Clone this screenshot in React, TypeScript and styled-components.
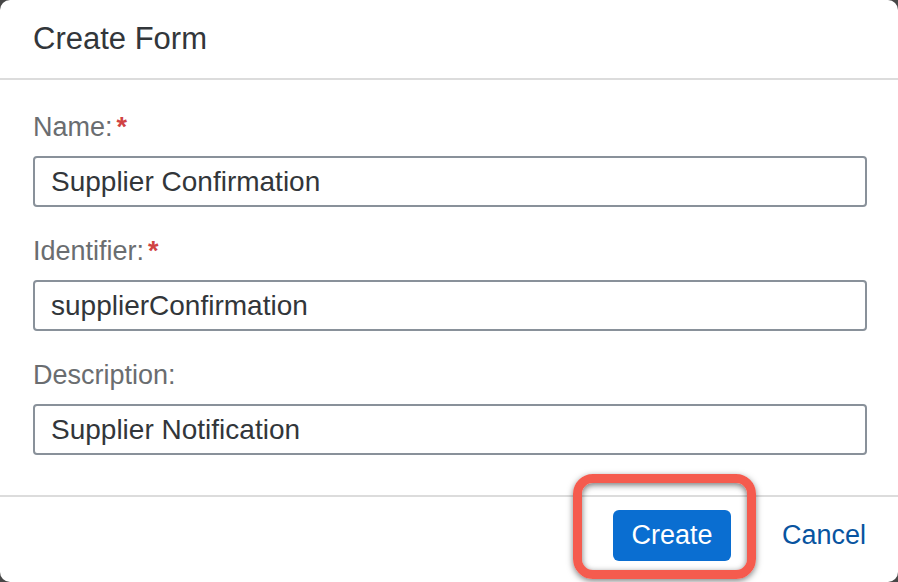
import React from "react";
import styled, { createGlobalStyle } from "styled-components";

const FONT = `"Liberation Sans", Arial, sans-serif`;

const Global = createGlobalStyle`
  html, body { margin: 0; padding: 0; background: #474747; }
  body { font-family: ${FONT}; }
  * { box-sizing: border-box; }
`;

const Dialog = styled.div`
  width: 898px;
  height: 582px;
  background: #ffffff;
  border-radius: 10px;
  overflow: hidden;
  display: flex;
  flex-direction: column;
`;

const Header = styled.header`
  height: 80px;
  flex: none;
  display: flex;
  align-items: center;
  padding: 0 33px;
  border-bottom: 2px solid #dcdcdc;
`;

const Title = styled.h1`
  margin: 0;
  font-size: 31px;
  font-weight: 400;
  color: #32363a;
`;

const Content = styled.div`
  padding: 32px 31px 40px 33px;
  display: flex;
  flex-direction: column;
  border-bottom: 2px solid #dcdcdc;
`;

const Field = styled.div<{ $last?: boolean }>`
  display: flex;
  flex-direction: column;
  margin-bottom: ${(p) => (p.$last ? 0 : 29)}px;
`;

const Label = styled.label`
  font-size: 27px;
  line-height: 30px;
  color: #6a6d70;
  margin-bottom: 14px;
`;

const Required = styled.span`
  color: #d04343;
  font-weight: 700;
  margin-left: 4px;
`;

const Input = styled.input`
  height: 51px;
  border: 2px solid #89919a;
  border-radius: 4px;
  padding: 0 16px;
  font-family: ${FONT};
  font-size: 28px;
  color: #32363a;
  background: #fff;
  outline: none;
`;

const Footer = styled.footer`
  display: flex;
  justify-content: flex-end;
  align-items: center;
  padding: 13px 32px 0 0;
  gap: 51px;
`;

const Highlight = styled.div`
  position: relative;
  display: flex;
`;

const Annotation = styled.div`
  position: absolute;
  left: -40px;
  top: -36px;
  right: -25px;
  bottom: -18px;
  border: 9px solid #f55b4e;
  border-radius: 20px;
  box-shadow: 0 2px 6px rgba(0, 0, 0, 0.5), inset 0 2px 6px rgba(0, 0, 0, 0.55);
  pointer-events: none;
`;

const Button = styled.button<{ $primary?: boolean }>`
  height: 51px;
  border-radius: 6px;
  font-family: ${FONT};
  font-size: 27px;
  cursor: pointer;
  border: none;
  padding: 0;
  background: ${(p) => (p.$primary ? "#0a6ed1" : "transparent")};
  color: ${(p) => (p.$primary ? "#ffffff" : "#0854a0")};
  width: ${(p) => (p.$primary ? "118px" : "auto")};
`;

export default function App() {
  return (
    <>
      <Global />
      <Dialog>
        <Header>
          <Title>Create Form</Title>
        </Header>
        <Content>
          <Field>
            <Label>
              Name:<Required>*</Required>
            </Label>
            <Input defaultValue="Supplier Confirmation" />
          </Field>
          <Field>
            <Label>
              Identifier:<Required>*</Required>
            </Label>
            <Input defaultValue="supplierConfirmation" />
          </Field>
          <Field $last>
            <Label>Description:</Label>
            <Input defaultValue="Supplier Notification" />
          </Field>
        </Content>
        <Footer>
          <Highlight>
            <Button $primary>Create</Button>
            <Annotation />
          </Highlight>
          <Button>Cancel</Button>
        </Footer>
      </Dialog>
    </>
  );
}
